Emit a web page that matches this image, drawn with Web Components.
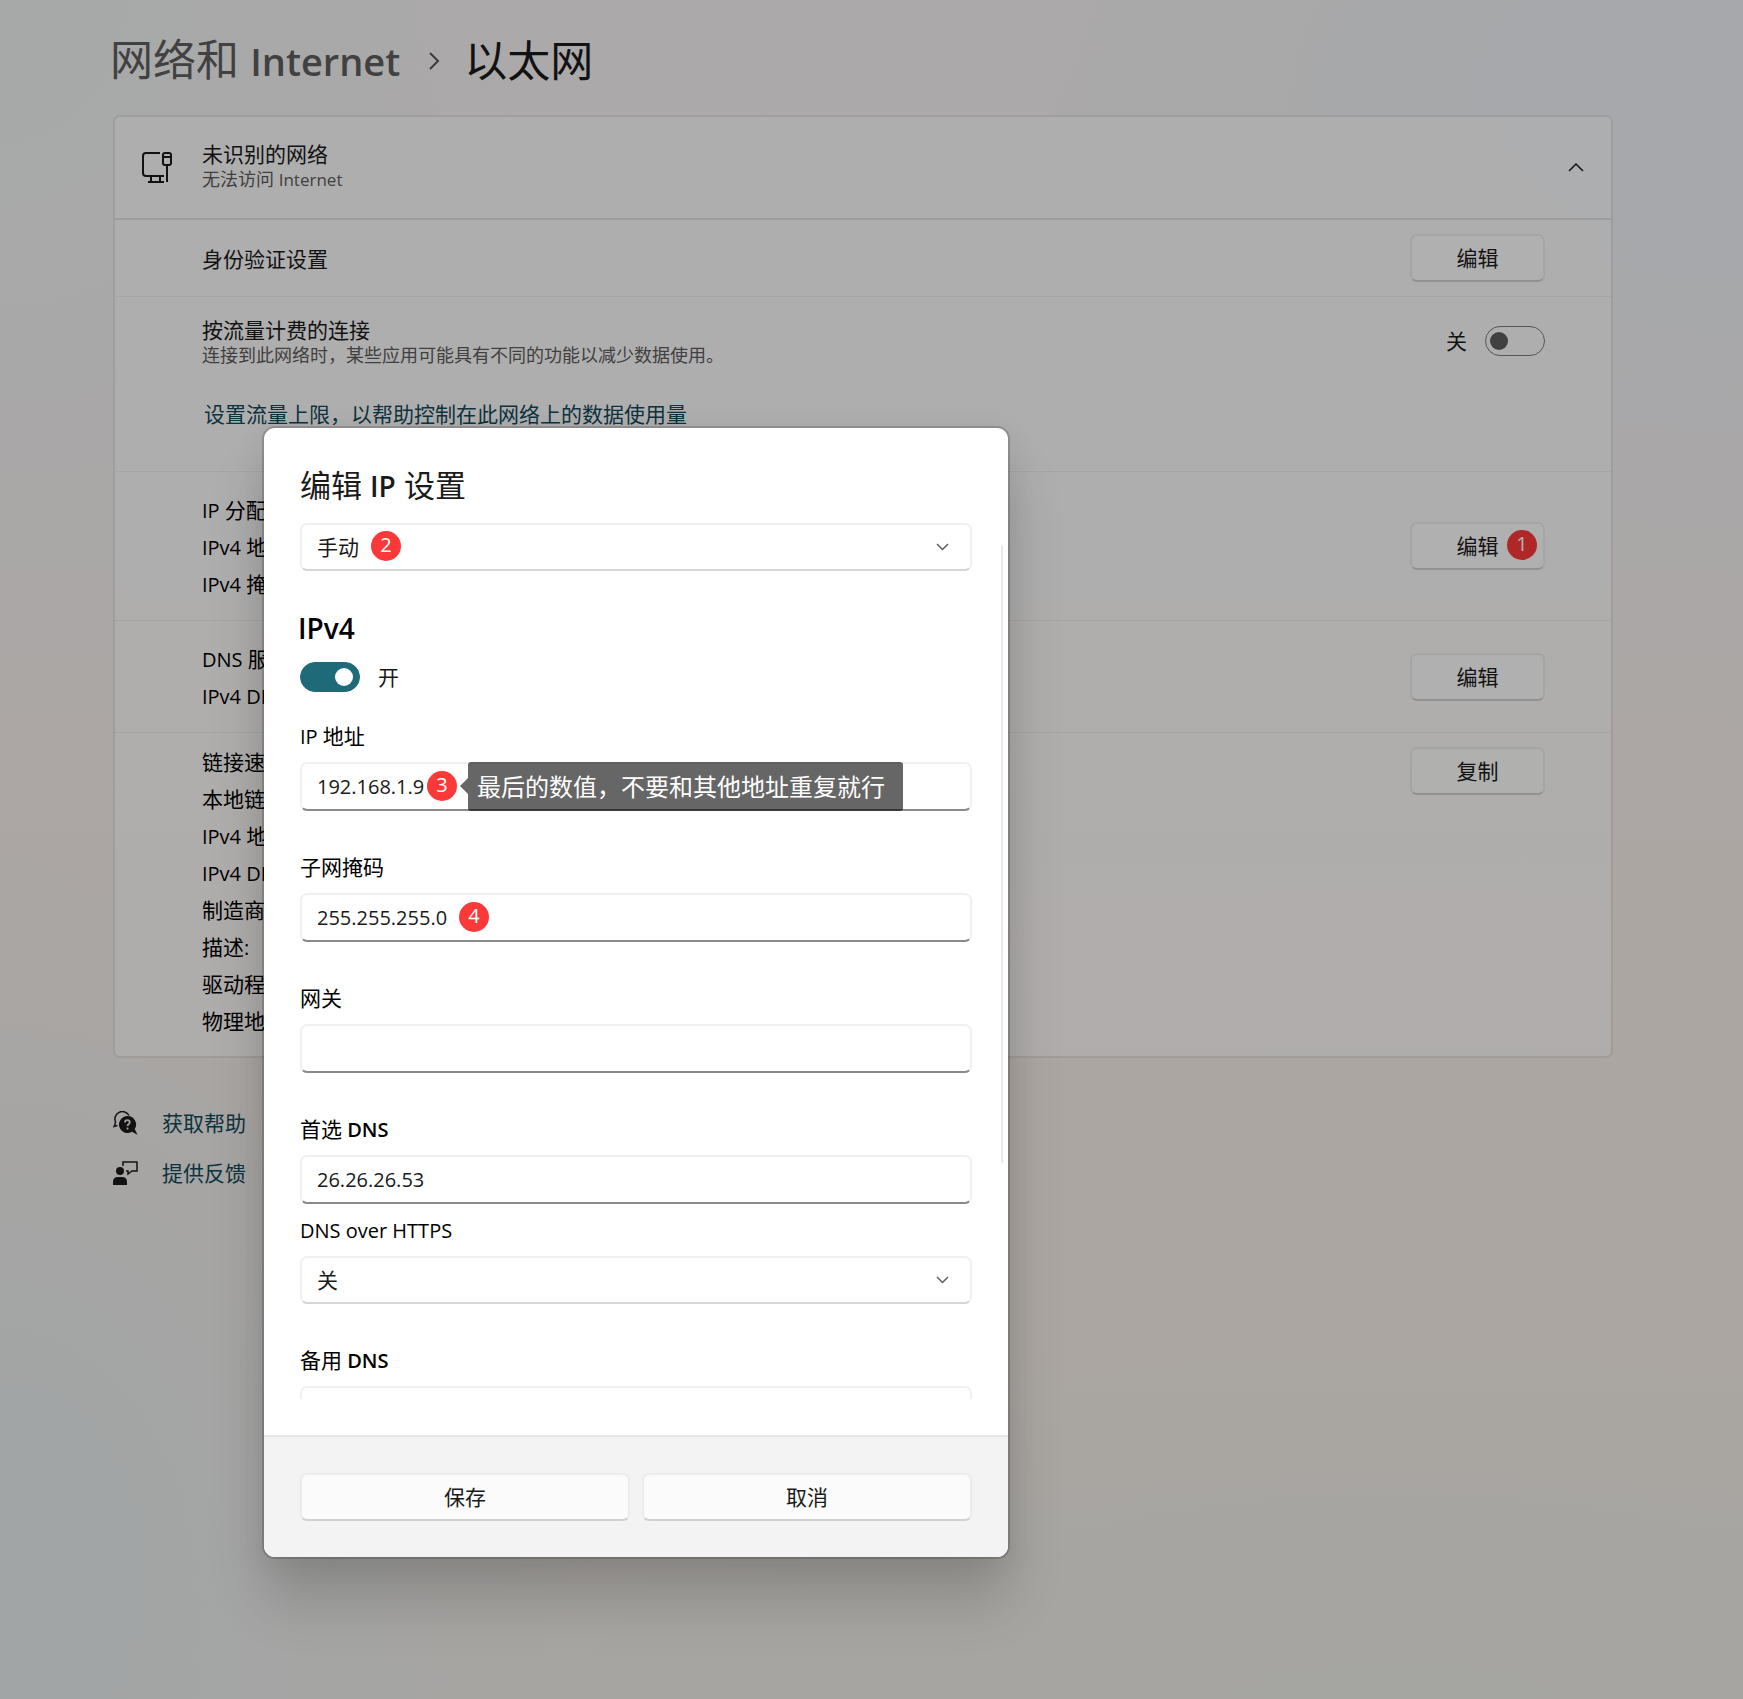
<!DOCTYPE html>
<html lang="zh-CN">
<head>
<meta charset="utf-8">
<meta name="viewport" content="width=device-width, initial-scale=1">
<title>网络和 Internet</title>
<style>
  body {
    margin: 0;
    min-height: 100vh;
    font-family: "Open Sans", "Noto Sans CJK SC", sans-serif;
    font-size: 21px;
    color: #1a1a1a;
    position: relative;
    background:
      radial-gradient(ellipse 40% 26% at 100% 6%, #eef1f5 30%, transparent 100%),
      radial-gradient(ellipse 26% 30% at 0% 0%, #f0f2f3 20%, transparent 100%),
      radial-gradient(ellipse 34% 46% at 0% 92%, #e9eded 20%, transparent 100%),
      radial-gradient(ellipse 60% 30% at 80% 108%, #edece7 20%, transparent 100%),
      linear-gradient(#f5f2f2 0%, #f4f0f0 30%, #f7eee9 55%, #f5eee8 80%, #f0ede8 100%);
  }
</style>
</head>
<body>
<settings-page>
  <settings-breadcrumb></settings-breadcrumb>

  <network-card>
    <network-header slot="header" name="未识别的网络" status="无法访问 Internet"></network-header>

    <setting-row>
      身份验证设置
      <push-button slot="action">编辑</push-button>
    </setting-row>
    <setting-row kind="metered">
      <metered-info></metered-info>
      <toggle-switch slot="action" label="关"></toggle-switch>
    </setting-row>
    <setting-row kind="list">
      <property-list items="IP 分配:|IPv4 地址:|IPv4 掩码:"></property-list>
      <push-button slot="action">编辑<step-badge slot="mark" style="right: 8px">1</step-badge></push-button>
    </setting-row>
    <setting-row kind="list">
      <property-list items="DNS 服务:|IPv4 DNS:"></property-list>
      <push-button slot="action">编辑</push-button>
    </setting-row>
    <setting-row kind="details">
      <property-list items="链接速度:|本地链接:|IPv4 地址:|IPv4 DNS:|制造商:|描述:|驱动程序:|物理地址:"></property-list>
      <push-button slot="action">复制</push-button>
    </setting-row>
  </network-card>

  <help-links></help-links>
</settings-page>

<modal-scrim></modal-scrim>

<ip-dialog>
  <combo-box name="IP 设置" value="手动" unlabelled>
    <step-badge style="left: 71px">2</step-badge>
  </combo-box>
  <ipv4-section></ipv4-section>
  <text-field label="IP 地址" value="192.168.1.9">
    <step-badge style="left: 127px">3</step-badge>
    <callout-tip style="left: 160px">最后的数值，不要和其他地址重复就行</callout-tip>
  </text-field>
  <text-field label="子网掩码" value="255.255.255.0">
    <step-badge style="left: 159px">4</step-badge>
  </text-field>
  <text-field label="网关" value=""></text-field>
  <text-field label="首选 DNS" value="26.26.26.53" strong joined></text-field>
  <combo-box name="DNS over HTTPS" value="关"></combo-box>
  <text-field label="备用 DNS" value="" strong></text-field>
</ip-dialog>

<script>
  const RESET = /* css */ `
    :host, * { box-sizing: border-box; }
    button, input, select { font: inherit; color: inherit; margin: 0; }
    a { text-decoration: none; }
  `;

  // Chinese runs are set one size up from the Latin ones.
  const mixedText = text => text.replace(/[\u4e00-\u9fff]+/g, "<span>$&</span>");

  class BaseElement extends HTMLElement {
    constructor() {
      super();
      this.attachShadow({ mode: "open" });
    }

    connectedCallback() {
      this.shadowRoot.innerHTML = `<style>${RESET}${this.constructor.STYLES}</style>${this.template()}`;
    }

    template() {
      return "<slot></slot>";
    }
  }

  class SettingsPage extends BaseElement {
    static STYLES = /* css */ `
      :host {
        display: block;
        padding: 32px 130px 0 113px;
      }
    `;
  }

  class SettingsBreadcrumb extends BaseElement {
    static STYLES = /* css */ `
      :host { display: block; margin: 0 0 26px -3px; }
      nav {
        display: flex;
        align-items: center;
        gap: 24px;
        font-size: 43px;
        line-height: 56px;
      }
      a { padding-right: 4px; color: #5f5e5f; }
      a span { font-size: 38px; font-weight: 600; }
      h1 { margin: 0; font-size: inherit; font-weight: 400; }
      svg { width: 12px; height: 20px; }
    `;

    template() {
      return /* html */ `
      <nav aria-label="路径">
        <a href="#network">网络和 <span>Internet</span></a>
        <svg viewBox="0 0 12 20" fill="none" stroke="#555" stroke-width="2" aria-hidden="true">
          <path d="M2 2l8 8-8 8"/>
        </svg>
        <h1>以太网</h1>
      </nav>`;
    }
  }

  class NetworkCard extends BaseElement {
    static STYLES = /* css */ `
      :host {
        display: block;
        border: 2px solid rgba(0, 0, 0, .06);
        border-radius: 7px;
        background: rgba(255, 255, 255, .6);
        background-clip: padding-box;
      }
    `;

    template() {
      return `<slot name="header"></slot><slot></slot>`;
    }
  }

  class NetworkHeader extends BaseElement {
    static STYLES = /* css */ `
      :host {
        display: flex;
        align-items: center;
        height: 103px;
        padding: 0 27px 2px 26px;
        border-bottom: 2px solid rgba(0, 0, 0, .09);
      }
      .icon { width: 32px; height: 32px; margin-right: 29px; }
      .text { flex: 1; }
      h2, p { margin: 0; font-weight: 400; line-height: 25px; }
      h2 { font-size: 21px; }
      p { font-size: 18px; color: #5c5c5c; }
      p span { font-size: 17px; }
      button {
        display: flex;
        padding: 0;
        border: 0;
        background: none;
      }
      button svg { width: 16px; height: 10px; }
    `;

    template() {
      const [place, latin] = this.getAttribute("status").split(" ");
      return /* html */ `
      <svg class="icon" viewBox="0 0 32 32" fill="none" stroke="currentColor" stroke-width="2" aria-hidden="true">
        <path d="M19 2H5Q2 2 2 5v17q0 3 3 3h18M10 25v6M19 25v6M7 31h16"/>
        <path d="M22 4q0-2 2-2h4q2 0 2 2v8q0 2-2 2h-4q-2 0-2-2zM22 6h8M26 14v17"/>
      </svg>
      <div class="text">
        <h2>${this.getAttribute("name")}</h2>
        <p>${place} <span>${latin}</span></p>
      </div>
      <button type="button" aria-label="折叠" aria-expanded="true">
        <svg viewBox="0 0 16 10" fill="none" stroke="currentColor" stroke-width="1.5" aria-hidden="true">
          <path d="M1 9l7-7 7 7"/>
        </svg>
      </button>`;
    }
  }

  class SettingRow extends BaseElement {
    static STYLES = /* css */ `
      :host {
        display: flex;
        align-items: center;
        justify-content: space-between;
        min-height: 77px;
        padding: 0 66px 0 87px;
      }
      :host(:not(:last-child)) { border-bottom: 1px solid rgba(0, 0, 0, .05); }
      :host([kind="metered"]) { align-items: flex-start; padding-top: 21px; padding-bottom: 40px; }
      :host([kind="metered"]) .action { padding-top: 8px; }
      :host([kind="list"]) { padding-top: 20px; padding-bottom: 17px; }
      :host([kind="list"]) .action { margin-top: -3px; }
      :host([kind="details"]) { align-items: flex-start; padding-top: 11px; padding-bottom: 16px; }
      :host([kind="details"]) .action { padding-top: 3px; }
    `;

    template() {
      return `<div><slot></slot></div><div class="action"><slot name="action"></slot></div>`;
    }
  }

  class MeteredInfo extends BaseElement {
    static STYLES = /* css */ `
      :host { display: block; }
      h3, p { margin: 0; font-weight: 400; line-height: 25px; }
      h3 { font-size: 21px; }
      p { font-size: 18px; color: #5c5c5c; }
      a { display: block; margin: 29px 0 0 2px; line-height: 34px; color: #12495a; }
    `;

    template() {
      return /* html */ `
      <h3>按流量计费的连接</h3>
      <p>连接到此网络时，某些应用可能具有不同的功能以减少数据使用。</p>
      <a href="#limit">设置流量上限，以帮助控制在此网络上的数据使用量</a>`;
    }
  }

  class PropertyList extends BaseElement {
    static STYLES = /* css */ `
      :host { display: block; color: #000; }
      ul { margin: 0; padding: 0; list-style: none; font-size: 20px; line-height: 37px; }
      li { white-space: nowrap; }
      span { font-size: 21px; line-height: 20px; }
    `;

    template() {
      const rows = this.getAttribute("items").split("|").map(item => `<li>${mixedText(item)}</li>`);
      return `<ul>${rows.join("")}</ul>`;
    }
  }

  class PushButton extends BaseElement {
    static STYLES = /* css */ `
      :host { display: block; position: relative; min-width: 135px; }
      button {
        display: block;
        width: 100%;
        height: 48px;
        padding: 0 0 2px;
        border: 2px solid rgba(0, 0, 0, .06);
        border-bottom-color: rgba(0, 0, 0, .17);
        border-radius: 7px;
        background: var(--button-background, rgba(255, 255, 255, .5));
      }
    `;

    template() {
      return `<button type="button"><slot></slot></button><slot name="mark"></slot>`;
    }
  }

  class ToggleSwitch extends BaseElement {
    static STYLES = /* css */ `
      :host { display: block; }
      label { display: flex; align-items: center; gap: 18px; line-height: 30px; }
      :host([checked]) label { flex-direction: row-reverse; justify-content: flex-end; }
      input {
        appearance: none;
        display: flex;
        align-items: center;
        width: 60px;
        height: 30px;
        padding: 0 4px;
        border: 1px solid #7c7c7c;
        border-radius: 15px;
      }
      input::before {
        content: "";
        width: 18px;
        height: 18px;
        border-radius: 50%;
        background: #5e5e5e;
      }
      input:checked {
        justify-content: flex-end;
        padding: 0 6px;
        border-color: #1f6a78;
        background: #1f6a78;
      }
      input:checked::before { background: #fff; }
    `;

    template() {
      return /* html */ `
      <label>
        <span>${this.getAttribute("label")}</span>
        <input type="checkbox" role="switch" ${this.hasAttribute("checked") ? "checked" : ""}>
      </label>`;
    }
  }

  class HelpLinks extends BaseElement {
    static STYLES = /* css */ `
      :host {
        display: flex;
        flex-direction: column;
        gap: 20px;
        padding: 50px 0;
      }
      a {
        display: flex;
        align-items: center;
        gap: 24px;
        line-height: 30px;
        color: #12495a;
      }
      svg { width: 25px; height: 25px; color: #1a1a1a; }
    `;

    template() {
      return /* html */ `
      <a href="#help">
        <svg viewBox="0 0 25 25" fill="none" aria-hidden="true">
          <path d="M16 4.500A7.500 7.500 0 0 0 2.500 11q-.2 2-1.500 4.500l3.500-1" stroke="currentColor" stroke-width="1.5"/>
          <path d="M14.500 5a8.500 8.500 0 1 0 4.500 15.700l5.500 3-2.800-5.600A8.500 8.500 0 0 0 14.500 5z" fill="currentColor"/>
          <path d="M12 11.500q0-2.300 2.400-2.300t2.300 2.200c0 1.600-2.200 1.800-2.200 3.600M14.500 16.500v2" stroke="#efe9e6" stroke-width="1.8"/>
        </svg>
        获取帮助
      </a>
      <a href="#feedback">
        <svg viewBox="0 0 25 25" fill="none" aria-hidden="true">
          <path d="M10 5V1h14v9h-5l-4 3v-3h-2" stroke="currentColor" stroke-width="1.5"/>
          <circle cx="7" cy="10" r="4" fill="currentColor"/>
          <path d="M0 24v-3q0-5 5-5h4q5 0 5 5v3z" fill="currentColor"/>
        </svg>
        提供反馈
      </a>`;
    }
  }

  class ModalScrim extends BaseElement {
    static STYLES = /* css */ `
      :host {
        display: block;
        position: absolute;
        inset: 0;
        background: rgba(0, 0, 0, .3);
      }
    `;
  }

  class StepBadge extends BaseElement {
    static STYLES = /* css */ `
      :host {
        position: absolute;
        top: 50%;
        width: 30px;
        height: 30px;
        margin-top: -16px;
        border-radius: 50%;
        background: #fc3939;
        color: #fff;
        font-size: 20px;
        line-height: 28px;
        text-align: center;
        pointer-events: none;
      }
    `;
  }

  class CalloutTip extends BaseElement {
    static STYLES = /* css */ `
      :host {
        position: absolute;
        top: 50%;
        display: flex;
        align-items: center;
        margin-top: -25px;
        color: #fff;
        font-size: 24px;
        line-height: 49px;
        white-space: nowrap;
      }
      :host::before {
        content: "";
        border: 8px solid transparent;
        border-left-width: 0;
        border-right-color: rgba(0, 0, 0, .6);
      }
      span {
        padding: 0 18px 0 9px;
        border-radius: 3px;
        background: rgba(0, 0, 0, .6);
      }
    `;

    template() {
      return "<span><slot></slot></span>";
    }
  }

  class Ipv4Section extends BaseElement {
    static STYLES = /* css */ `
      :host { display: block; margin: 37px 0 32px; }
      h3 {
        margin: 0 0 14px -2px;
        font-size: 28px;
        font-weight: 600;
        line-height: 40px;
        color: #000;
      }
    `;

    template() {
      return `<h3>IPv4</h3><toggle-switch label="开" checked></toggle-switch>`;
    }
  }

  const FIELD_STYLES = /* css */ `
    :host { display: block; margin-bottom: 44px; }
    label {
      display: block;
      margin-bottom: 12px;
      line-height: 26px;
      font-size: 20px;
      color: #000;
    }
    label span { font-size: 21px; line-height: 20px; font-weight: 400; }
    .box { display: grid; position: relative; }
    input, select {
      width: 100%;
      border: 2px solid #f0f0f0;
      border-radius: 7px;
      background: #fff;
    }
  `;

  class TextField extends BaseElement {
    static STYLES = /* css */ `
      ${FIELD_STYLES}
      :host([strong]) label { font-weight: 600; }
      :host([joined]) { margin-bottom: 14px; }
      input {
        height: 49px;
        padding: 0 15px;
        border-bottom-color: #8a8a8a;
        font-size: 20px;
      }
    `;

    template() {
      return /* html */ `
      <label for="field">${mixedText(this.getAttribute("label"))}</label>
      <div class="box">
        <input id="field" type="text" value="${this.getAttribute("value")}">
        <slot></slot>
      </div>`;
    }
  }

  class ComboBox extends BaseElement {
    static STYLES = /* css */ `
      ${FIELD_STYLES}
      :host([unlabelled]) { margin-bottom: 0; }
      select {
        appearance: none;
        height: 48px;
        padding: 0 48px 1px 15px;
        border-bottom-color: #d5d5d5;
      }
      svg {
        position: absolute;
        right: 23px;
        top: 19px;
        width: 13px;
        height: 9px;
        pointer-events: none;
      }
    `;

    template() {
      const name = this.getAttribute("name");
      const unlabelled = this.hasAttribute("unlabelled");
      return /* html */ `
      ${unlabelled ? "" : `<label for="choice">${mixedText(name)}</label>`}
      <div class="box">
        <select id="choice" ${unlabelled ? `aria-label="${name}"` : ""}>
          <option>${this.getAttribute("value")}</option>
        </select>
        <svg viewBox="0 0 13 9" fill="none" stroke="#5c5c5c" stroke-width="1.5" aria-hidden="true">
          <path d="M1 2l5.500 5.500L12 2"/>
        </svg>
        <slot></slot>
      </div>`;
    }
  }

  class IpDialog extends BaseElement {
    static STYLES = /* css */ `
      :host {
        position: absolute;
        inset: 428px auto 142px 264px;
        display: flex;
        flex-direction: column;
        width: 744px;
        border-radius: 11px;
        background: #fff;
        box-shadow: 0 0 0 2px rgba(0, 0, 0, .16), 0 44px 56px rgba(0, 0, 0, .16), 0 6px 30px rgba(0, 0, 0, .08);
      }
      h2 {
        margin: 0;
        padding: 35px 36px 15px;
        font-size: 31px;
        font-weight: 400;
        line-height: 44px;
      }
      h2 span { font-size: 28px; font-weight: 600; }
      .content {
        position: relative;
        flex: 1;
        min-height: 0;
        margin-bottom: 36px;
        padding: 0 36px;
        overflow-y: auto;
        scrollbar-width: none;
      }
      .thumb {
        position: absolute;
        top: 117px;
        right: 5px;
        width: 2px;
        height: 618px;
        border-radius: 1px;
        background: #e9e9e9;
      }
      footer {
        --button-background: #fbfbfb;
        display: grid;
        grid-template-columns: 1fr 1fr;
        gap: 12px;
        padding: 36px;
        border-top: 2px solid #e5e5e5;
        border-radius: 0 0 11px 11px;
        background: #f3f3f3;
      }
    `;

    connectedCallback() {
      super.connectedCallback();
      this.setAttribute("role", "dialog");
      this.setAttribute("aria-label", "编辑 IP 设置");
    }

    template() {
      return /* html */ `
      <h2>编辑 <span>IP</span> 设置</h2>
      <div class="content"><slot></slot></div>
      <div class="thumb"></div>
      <footer>
        <push-button>保存</push-button>
        <push-button>取消</push-button>
      </footer>`;
    }
  }

  customElements.define("settings-page", SettingsPage);
  customElements.define("settings-breadcrumb", SettingsBreadcrumb);
  customElements.define("network-card", NetworkCard);
  customElements.define("network-header", NetworkHeader);
  customElements.define("setting-row", SettingRow);
  customElements.define("metered-info", MeteredInfo);
  customElements.define("property-list", PropertyList);
  customElements.define("push-button", PushButton);
  customElements.define("toggle-switch", ToggleSwitch);
  customElements.define("help-links", HelpLinks);
  customElements.define("modal-scrim", ModalScrim);
  customElements.define("step-badge", StepBadge);
  customElements.define("callout-tip", CalloutTip);
  customElements.define("ipv4-section", Ipv4Section);
  customElements.define("text-field", TextField);
  customElements.define("combo-box", ComboBox);
  customElements.define("ip-dialog", IpDialog);
</script>
</body>
</html>
